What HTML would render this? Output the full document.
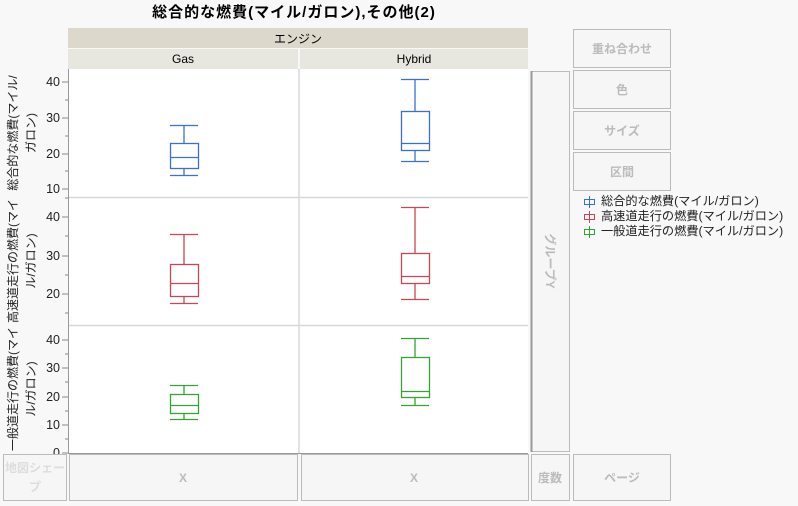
<!DOCTYPE html>
<html><head><meta charset="utf-8"><style>
body{margin:0;background:#f8f8f8;width:798px;height:501px;overflow:hidden;font-family:"Liberation Sans","Noto Sans CJK JP",sans-serif}
</style></head><body>
<svg width="798" height="501" xmlns="http://www.w3.org/2000/svg" font-family="Liberation Sans, Noto Sans CJK JP, sans-serif">
<rect width="798" height="501" fill="#f8f8f8"/>
<text x="294" y="17" font-size="15" letter-spacing="1" font-weight="bold" text-anchor="middle" fill="#000">総合的な燃費(マイル/ガロン),その他(2)</text>
<rect x="68" y="28" width="460" height="20" fill="#dcd9cc"/>
<text x="298" y="43" font-size="12" text-anchor="middle">エンジン</text>
<rect x="68" y="49" width="230" height="20" fill="#e8e7df"/>
<rect x="300" y="49" width="228" height="20" fill="#e8e7df"/>
<text x="183" y="63" font-size="12" text-anchor="middle">Gas</text>
<text x="414" y="63" font-size="12" text-anchor="middle">Hybrid</text>
<rect x="68" y="69" width="460" height="384" fill="#fff"/>
<g stroke="#d8d8d8" stroke-width="1.5">
<line x1="299" y1="69" x2="299" y2="453"/>
<line x1="68" y1="197.5" x2="528" y2="197.5"/>
<line x1="68" y1="325.5" x2="528" y2="325.5"/>
</g>
<line x1="68.5" y1="69" x2="68.5" y2="453" stroke="#999"/>
<line x1="68" y1="453.5" x2="528" y2="453.5" stroke="#999"/>
<g stroke="#888">
<line x1="62" y1="82" x2="68" y2="82"/><line x1="65" y1="100" x2="68" y2="100"/>
<line x1="62" y1="118" x2="68" y2="118"/><line x1="65" y1="136" x2="68" y2="136"/>
<line x1="62" y1="154" x2="68" y2="154"/><line x1="65" y1="171" x2="68" y2="171"/>
<line x1="62" y1="189" x2="68" y2="189"/>
<line x1="62" y1="217" x2="68" y2="217"/><line x1="65" y1="236" x2="68" y2="236"/>
<line x1="62" y1="256" x2="68" y2="256"/><line x1="65" y1="275" x2="68" y2="275"/>
<line x1="62" y1="294" x2="68" y2="294"/><line x1="65" y1="313" x2="68" y2="313"/>
<line x1="65" y1="198" x2="68" y2="198"/>
<line x1="62" y1="340" x2="68" y2="340"/><line x1="65" y1="354" x2="68" y2="354"/>
<line x1="62" y1="368" x2="68" y2="368"/><line x1="65" y1="382" x2="68" y2="382"/>
<line x1="62" y1="397" x2="68" y2="397"/><line x1="65" y1="411" x2="68" y2="411"/>
<line x1="62" y1="425" x2="68" y2="425"/><line x1="65" y1="439" x2="68" y2="439"/>
<line x1="62" y1="453" x2="68" y2="453"/>
</g>
<g font-size="12.5" text-anchor="end" fill="#222">
<text x="60" y="86">40</text><text x="60" y="122">30</text><text x="60" y="158">20</text><text x="60" y="193">10</text>
<text x="60" y="221">40</text><text x="60" y="260">30</text><text x="60" y="298">20</text>
<text x="60" y="344">40</text><text x="60" y="372">30</text><text x="60" y="401">20</text><text x="60" y="429">10</text><text x="60" y="457">0</text>
</g>
<g font-size="12" fill="#222" text-anchor="middle">
<text transform="translate(17,133) rotate(-90)">総合的な燃費(マイル/</text>
<text transform="translate(35,133) rotate(-90)">ガロン)</text>
<text transform="translate(17,261) rotate(-90)">高速道走行の燃費(マイ</text>
<text transform="translate(35,261) rotate(-90)">ル/ガロン)</text>
<text transform="translate(17,389) rotate(-90)">一般道走行の燃費(マイ</text>
<text transform="translate(35,389) rotate(-90)">ル/ガロン)</text>
</g>
<g fill="none" stroke-width="1.3">
<g stroke="#3a6fd8">
<line x1="170" y1="125.5" x2="198" y2="125.5"/><line x1="184" y1="125" x2="184" y2="143"/>
<rect x="170.5" y="143.5" width="28" height="25"/><line x1="170" y1="157.5" x2="198" y2="157.5"/>
<line x1="184" y1="168" x2="184" y2="175"/><line x1="170" y1="175.5" x2="198" y2="175.5"/>
<line x1="401" y1="79.5" x2="429" y2="79.5"/><line x1="415" y1="79" x2="415" y2="111"/>
<rect x="401.5" y="111.5" width="28" height="39"/><line x1="401" y1="143.5" x2="429" y2="143.5"/>
<line x1="415" y1="150" x2="415" y2="161"/><line x1="401" y1="161.5" x2="429" y2="161.5"/>
</g>
<g stroke="#cc4455">
<line x1="170" y1="234.5" x2="198" y2="234.5"/><line x1="184" y1="234" x2="184" y2="264"/>
<rect x="170.5" y="264.5" width="28" height="32"/><line x1="170" y1="283.5" x2="198" y2="283.5"/>
<line x1="184" y1="296" x2="184" y2="303"/><line x1="170" y1="303.5" x2="198" y2="303.5"/>
<line x1="401" y1="207.5" x2="429" y2="207.5"/><line x1="415" y1="207" x2="415" y2="253"/>
<rect x="401.5" y="253.5" width="28" height="30"/><line x1="401" y1="276.5" x2="429" y2="276.5"/>
<line x1="415" y1="283" x2="415" y2="299"/><line x1="401" y1="299.5" x2="429" y2="299.5"/>
</g>
<g stroke="#33a533">
<line x1="170" y1="385.5" x2="198" y2="385.5"/><line x1="184" y1="385" x2="184" y2="394"/>
<rect x="170.5" y="394.5" width="28" height="19"/><line x1="170" y1="405.5" x2="198" y2="405.5"/>
<line x1="184" y1="413" x2="184" y2="419"/><line x1="170" y1="419.5" x2="198" y2="419.5"/>
<line x1="401" y1="338.5" x2="429" y2="338.5"/><line x1="415" y1="338" x2="415" y2="357"/>
<rect x="401.5" y="357.5" width="28" height="40"/><line x1="401" y1="391.5" x2="429" y2="391.5"/>
<line x1="415" y1="397" x2="415" y2="405"/><line x1="401" y1="405.5" x2="429" y2="405.5"/>
</g>
</g>
<rect x="531.5" y="71.5" width="38" height="380" fill="#f6f6f6" stroke="#bbb"/>
<line x1="531.5" y1="71" x2="531.5" y2="452" stroke="#999" stroke-width="2"/>
<text transform="translate(546,261) rotate(90)" font-size="12" font-weight="bold" fill="#bbb" text-anchor="middle">グループY</text>
<g fill="#f6f6f6" stroke="#bbb">
<rect x="573.5" y="29.5" width="97" height="38"/>
<rect x="573.5" y="70.5" width="97" height="38"/>
<rect x="573.5" y="111.5" width="97" height="38"/>
<rect x="573.5" y="152.5" width="97" height="38"/>
<rect x="3.5" y="454.5" width="63" height="46"/>
<rect x="69.5" y="454.5" width="228" height="46"/>
<rect x="301.5" y="454.5" width="227" height="46"/>
<rect x="531.5" y="454.5" width="38" height="46"/>
<rect x="573.5" y="454.5" width="97" height="46"/>
</g>
<g font-size="12" font-weight="bold" fill="#bbb" text-anchor="middle">
<text x="622" y="53">重ね合わせ</text>
<text x="622" y="94">色</text>
<text x="622" y="135">サイズ</text>
<text x="622" y="176">区間</text>
<text x="35" y="472" fill="#ddd">地図シェー</text>
<text x="35" y="491" fill="#ddd">プ</text>
<text x="183" y="482">X</text>
<text x="414" y="482">X</text>
<text x="550" y="482">度数</text>
<text x="622" y="482">ページ</text>
</g>
<g font-size="12.2" fill="#222">
<text x="601" y="205">総合的な燃費(マイル/ガロン)</text>
<text x="601" y="220">高速道走行の燃費(マイル/ガロン)</text>
<text x="601" y="235">一般道走行の燃費(マイル/ガロン)</text>
</g>
<g fill="none" stroke-width="1">
<g stroke="#3a6fd8"><rect x="584.5" y="199.5" width="10" height="5"/><line x1="589.5" y1="196" x2="589.5" y2="208"/></g>
<g stroke="#cc4455"><rect x="584.5" y="214.5" width="10" height="5"/><line x1="589.5" y1="211" x2="589.5" y2="223"/></g>
<g stroke="#33a533"><rect x="584.5" y="229.5" width="10" height="5"/><line x1="589.5" y1="226" x2="589.5" y2="238"/></g>
</g>
</svg>
</body></html>
